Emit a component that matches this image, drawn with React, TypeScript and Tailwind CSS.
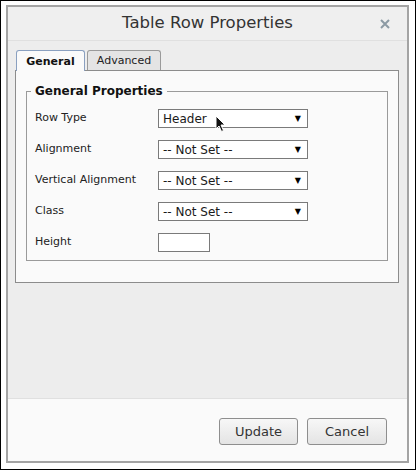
import React from "react";

const font = { fontFamily: '"DejaVu Sans", Verdana, sans-serif' };

const Select = ({ value }: { value: string }) => (
  <div className="relative flex items-center w-[150px] h-[19px] border border-[#7a7a7a] bg-white pl-[4px] text-[12px] text-[#1a1a1a]">
    <span>{value}</span>
    <span className="absolute right-[6px] top-[3px] text-[8px] text-black">▼</span>
  </div>
);

const Row = ({ label, children }: { label: string; children: React.ReactNode }) => (
  <div className="flex items-center h-[19px]">
    <div className="w-[123px] text-[11px] text-[#222]">{label}</div>
    {children}
  </div>
);

export default function App() {
  return (
    <div className="w-[416px] h-[470px] border border-black bg-white pl-[5px] pt-[4px]" style={font}>
      <div className="flex flex-col w-[403px] h-[458px] border-2 border-[#a4a4a4]">
        {/* Titelleiste */}
        <div className="relative flex items-center justify-center h-[34px] bg-[#efefef] border-b border-[#e0e0e0]">
          <span className="text-[16.5px] text-[#333]">Table Row Properties</span>
          <svg className="absolute right-[17px] top-[12px]" width="10" height="10" viewBox="0 0 10 10">
            <path d="M1 1L9 9M9 1L1 9" stroke="#8c9aa4" strokeWidth="2" />
          </svg>
        </div>

        {/* Inhalt */}
        <div className="flex-1 bg-[#ededed] pt-[9px] pl-[7px] pr-[8px]">
          <div className="flex gap-[2px] pl-[1px]">
            <div className="relative z-10 -mb-px h-[21px] w-[69px] flex items-center justify-center rounded-t-[3px] border border-b-0 border-[#8aa0c0] bg-[#fafafa] pt-[2px] text-[11px] font-bold text-[#111]">
              General
            </div>
            <div className="h-[20px] w-[74px] flex items-center justify-center rounded-t-[3px] border border-b-0 border-[#9a9a9a] bg-[#e4e4e4] pt-[2px] text-[11px] text-[#222]">
              Advanced
            </div>
          </div>
          <div className="border border-[#8c8c8c] bg-[#fafafa] px-[10px] pt-[11px] pb-[21px]">
            <fieldset className="border border-[#9a9a9a] pl-[8px] pr-[8px] pb-[8px]">
              <legend className="-ml-[4px] px-[4px] text-[12px] font-bold text-[#111]">General Properties</legend>
              <div className="flex flex-col gap-[12px] pt-[9px]">
                <Row label="Row Type">
                  <div className="relative">
                    <Select value="Header" />
                    <svg className="absolute left-[57px] top-[6px]" width="12" height="18" viewBox="0 0 12 18">
                      <path d="M1 1V14L4 11L6.5 16.5L8.5 15.5L6 10H10Z" fill="#111" stroke="#fff" strokeWidth="1" />
                    </svg>
                  </div>
                </Row>
                <Row label="Alignment">
                  <Select value="-- Not Set --" />
                </Row>
                <Row label="Vertical Alignment">
                  <Select value="-- Not Set --" />
                </Row>
                <Row label="Class">
                  <Select value="-- Not Set --" />
                </Row>
                <Row label="Height">
                  <div className="w-[52px] h-[19px] border border-[#7a7a7a] bg-white" />
                </Row>
              </div>
            </fieldset>
          </div>
        </div>

        {/* Fußleiste */}
        <div className="flex justify-end gap-[9px] h-[63px] bg-[#fafafa] border-t border-[#e0e0e0] pt-[19px] pr-[20px]">
          <button className="w-[79px] h-[27px] rounded-[3px] border border-[#8e8e8e] bg-gradient-to-b from-[#f7f7f7] to-[#e4e4e4] text-[13px] text-[#333]">
            Update
          </button>
          <button className="w-[80px] h-[27px] rounded-[3px] border border-[#8e8e8e] bg-gradient-to-b from-[#f7f7f7] to-[#e4e4e4] text-[13px] text-[#333]">
            Cancel
          </button>
        </div>
      </div>
    </div>
  );
}
